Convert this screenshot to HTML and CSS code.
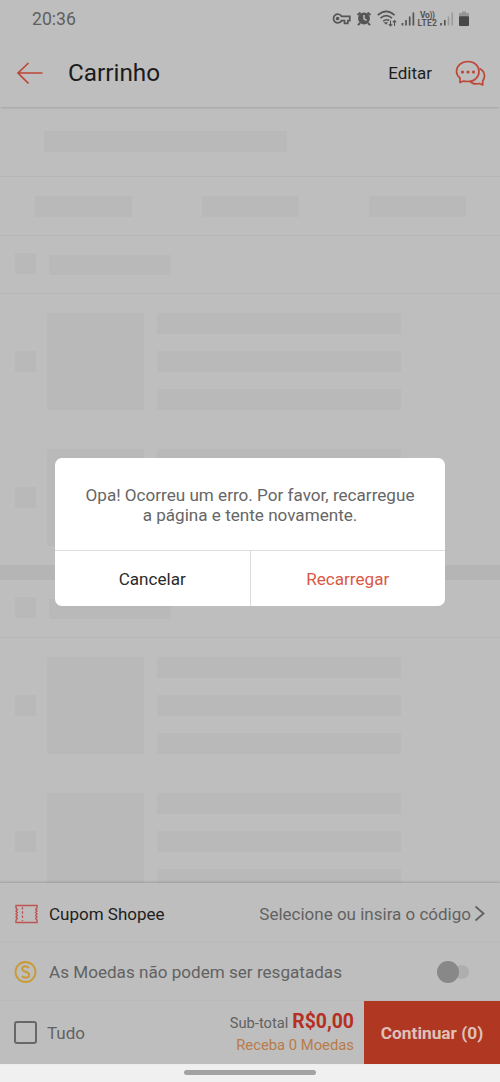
FILE: index.html
```html
<!DOCTYPE html>
<html lang="pt-BR">
<head>
<meta charset="utf-8">
<title>Carrinho</title>
<link rel="stylesheet" href="styles.css">
</head>
<body>
<div class="screen">
  <div class="status">
    <span class="clock">20:36</span>
    <svg class="status-icons" width="140" height="22" viewBox="0 0 140 22">
      <g fill="none" stroke="#555" stroke-width="1.700">
        <path d="M11.500 8.300A4.300 4.300 0 1 0 11.500 12.700H14.500V15.300H17.800V12.700H19.800V8.300Z"/>
        <circle cx="7.600" cy="10.500" r="1"/>
      </g>
      <circle cx="34" cy="10.500" r="5.900" fill="#555"/>
      <path d="M27.500 7 30.500 4.500M40.500 7 37.500 4.500M30 15l-2 2.200M38 15l2 2.200" stroke="#555" stroke-width="2"/>
      <path d="M34 7V10.800l2.600 1.500" fill="none" stroke="#c2c2c2" stroke-width="1.400"/>
      <g fill="none" stroke="#555" stroke-width="1.600">
        <path d="M47.800 7.200Q56.200-.600 64.600 7.200M50.500 10.200Q56.200 5 61.900 10.200M53.200 13.200Q56.200 10.800 59.200 12.500"/>
      </g>
      <path d="M56.200 16.800 53.500 14.200h4.500z" fill="#555"/>
      <path d="M60.500 12.500v5.500M58.800 16.200l1.700 1.800 1.700-1.800M64.500 18v-5.500M62.800 14.300l1.700-1.800 1.700 1.800" fill="none" stroke="#555" stroke-width="1.100"/>
      <path d="M72.500 17.500v-2.500M76 17.500v-5.500M79.700 17.500v-9M83.400 17.500v-13" stroke="#555" stroke-width="1.700"/>
      <text class="volte" x="90" y="9.500" textLength="15">Vo))</text>
      <text class="volte" x="87.500" y="17.700" textLength="19.500">LTE2</text>
      <path d="M111 17.500v-2.500M114.800 17.500v-5.500" stroke="#555" stroke-width="1.700"/>
      <path d="M118.500 17.500v-9M122.200 17.500v-13" stroke="#999" stroke-width="1.500"/>
      <path d="M129 5h3V3.500h4V5h3V9h-10z" fill="#969696"/>
      <rect x="129" y="8.300" width="10" height="9.700" rx="1" fill="#484848"/>
    </svg>
  </div>
  <div class="header">
    <svg class="back" width="28" height="24" viewBox="0 0 28 24"><path d="M26.500 12H2.500M12.500 2 2 12l10.500 10.500" fill="none" stroke="#c04536" stroke-width="1.700"/></svg>
    <h1 class="title">Carrinho</h1>
    <span class="edit">Editar</span>
    <svg class="chat" width="32" height="28" viewBox="0 0 32 28">
      <g fill="none" stroke="#bd4738" stroke-width="1.700" stroke-linejoin="round">
        <path d="M13 2.500C19.500 2.500 24 7 24 12.500S19.500 22.500 13 22.500Q9.500 22.500 8.500 22L5 23.500V19Q1.500 16 1.500 12.500C1.500 7 6.500 2.500 13 2.500Z"/>
        <path d="M24.500 9.500C28 11 29.500 14 29.500 17Q29.500 19.500 27.700 22V26L24.500 24.500Q18 26 15.500 22.500"/>
      </g>
      <g fill="#bd4738"><circle cx="7.500" cy="13" r="1.600"/><circle cx="13" cy="13" r="1.600"/><circle cx="18.500" cy="13" r="1.600"/></g>
    </svg>
  </div>

  <div class="content">
    <div class="row banner"><i class="sk wide"></i></div>
    <div class="row tabs"><i class="sk tab"></i><i class="sk tab"></i><i class="sk tab"></i></div>
    <div class="row shop"><i class="sk check"></i><i class="sk name"></i></div>
    <div class="items">
      <div class="item"><i class="sk check"></i><i class="sk thumb"></i><div class="lines"><i class="sk line"></i><i class="sk line"></i><i class="sk line"></i></div></div>
      <div class="item"><i class="sk check"></i><i class="sk thumb"></i><div class="lines"><i class="sk line"></i><i class="sk line"></i><i class="sk line"></i></div></div>
    </div>
    <div class="band"></div>
    <div class="row shop"><i class="sk check"></i><i class="sk name"></i></div>
    <div class="items">
      <div class="item"><i class="sk check"></i><i class="sk thumb"></i><div class="lines"><i class="sk line"></i><i class="sk line"></i><i class="sk line"></i></div></div>
      <div class="item"><i class="sk check"></i><i class="sk thumb"></i><div class="lines"><i class="sk line"></i><i class="sk line"></i><i class="sk line"></i></div></div>
    </div>
  </div>

  <div class="footer">
    <div class="option coupon">
      <svg class="option-icon" width="24" height="20" viewBox="0 0 24 20">
        <path d="M2 1.500H23V4l-1.300 1.500L23 7l-1.300 1.500L23 10l-1.300 1.500L23 13l-1.300 1.500L23 16V18.500H2V16l1.300-1.500L2 13l1.300-1.500L2 10l1.300-1.500L2 7l1.300-1.500L2 4Z" fill="none" stroke="#bd5352" stroke-width="1.400"/>
        <path d="M8.500 3V17" stroke="#bd5352" stroke-width="1.300" stroke-dasharray="2.500 1.800"/>
      </svg>
      <span class="option-name">Cupom Shopee</span>
      <span class="option-hint">Selecione ou insira o código</span>
      <svg class="chevron" width="12" height="18" viewBox="0 0 12 18"><path d="M1.500 1.500 9.500 8.500l-8 7" fill="none" stroke="#626266" stroke-width="1.800"/></svg>
    </div>
    <div class="option">
      <svg class="option-icon" width="24" height="24" viewBox="0 0 24 24">
        <circle cx="11.500" cy="12" r="10" fill="none" stroke="#c99a35" stroke-width="1.800"/>
        <path d="M15 8Q13.500 6.300 11.500 6.300C9.500 6.300 8.200 7.500 8.200 9C8.200 12.500 15.200 11 15.200 14.800C15.200 16.500 13.600 17.700 11.700 17.700Q9.500 17.700 7.800 16" fill="none" stroke="#c99a35" stroke-width="1.900"/>
      </svg>
      <span class="coins">As Moedas não podem ser resgatadas</span>
      <span class="toggle"><i class="knob"></i><i class="track"></i></span>
    </div>
    <div class="checkout">
      <i class="box"></i>
      <span class="all">Tudo</span>
      <div class="totals">
        <div class="subtotal"><span class="sub-label">Sub-total</span><b class="amount">R$0,00</b></div>
        <div class="earn">Receba 0 Moedas</div>
      </div>
      <div class="continue">Continuar (0)</div>
    </div>
  </div>
  <div class="navbar"><i class="pill"></i></div>

  <div class="dialog">
    <p class="message">Opa! Ocorreu um erro. Por favor, recarregue<br>a página e tente novamente.</p>
    <div class="actions">
      <div class="action cancel">Cancelar</div>
      <div class="action reload">Recarregar</div>
    </div>
  </div>
</div>
</body>
</html>
```

FILE: styles.css
```css
* { box-sizing: border-box; }
body { margin: 0; font-family: Roboto, "Liberation Sans", sans-serif; background: #bebebe; }
.screen { position: relative; width: 500px; height: 1082px; display: flex; flex-direction: column; overflow: hidden; background: #bebebe; }
.status { height: 38px; flex: none; display: flex; justify-content: space-between; padding: 8px 30px 0 32px; }
.clock { font-size: 17.6px; line-height: 22px; color: #606060; }
.status-icons { flex: none; }
.volte { font-size: 8.5px; font-weight: 700; fill: #555; }
.header { height: 69px; flex: none; display: flex; align-items: center; padding: 0 13px 0 16px; box-shadow: 0 2px 2px -1px rgba(0, 0, 0, .14); }
.back { flex: none; }
.title { margin: 0 auto 0 24px; font-size: 24.3px; line-height: 30px; font-weight: 400; color: #1b1b1b; }
.edit { font-size: 17px; color: #1e1e1e; margin-right: 23px; }
.chat { flex: none; }

.content { flex: 1; min-height: 0; overflow: hidden; padding-top: 2px; }
.sk { display: block; flex: none; background: #b9b9b9; }
.row { border-bottom: 1px solid #b6b6b6; display: flex; align-items: center; }
.banner { height: 68px; padding: 0 44px; }
.wide { width: 243px; height: 21px; margin-bottom: 2px; }
.tabs { height: 59px; padding: 0 34px 0 35px; justify-content: space-between; }
.tab { width: 97px; height: 21px; }
.shop { height: 58px; padding-left: 15px; gap: 13px; }
.check { width: 21px; height: 21px; }
.shop .check { margin-bottom: 2px; }
.name { width: 122px; height: 20px; }
.items { height: 271px; padding: 19px 15px; display: flex; flex-direction: column; gap: 39px; }
.item { height: 97px; flex: none; display: flex; align-items: center; }
.thumb { width: 97px; height: 97px; margin: 0 13px 0 11px; }
.lines { display: flex; flex-direction: column; justify-content: space-between; height: 97px; }
.line { width: 244px; height: 21px; }
.band { height: 15px; background: #b5b5b5; }

.footer { flex: none; height: 181px; background: #bebebe; position: relative; box-shadow: 0 -1px 2px rgba(0, 0, 0, .16); }
.option { height: 59px; display: flex; align-items: center; padding: 3px 14px 2px; border-bottom: 1px solid #b9b9b9; font-size: 17.1px; color: #626262; }
.coupon { font-size: 17px; padding-top: 5px; }
.option-icon { flex: none; margin-right: 11px; }
.option-name { color: #1d1d1d; }
.option-hint { margin-left: auto; }
.chevron { margin-left: 3px; flex: none; }
.toggle { margin: 0 17px 0 auto; display: flex; align-items: center; }
.knob { width: 22px; height: 22px; border-radius: 50%; background: #888; }
.track { width: 10px; height: 14px; border-radius: 0 7px 7px 0; background: #aeaeae; box-shadow: -3px 0 0 -1px #aeaeae; }
.knob { position: relative; z-index: 1; }
.checkout { height: 63px; display: flex; align-items: center; padding-left: 14px; color: #626262; }
.box { width: 23px; height: 23px; border: 2px solid #686868; border-radius: 3px; }
.all { margin-left: 10px; font-size: 17px; }
.totals { margin-left: auto; margin-right: 10px; padding-top: 1px; text-align: right; }
.subtotal { line-height: 22px; display: flex; align-items: baseline; justify-content: flex-end; gap: 4px; }
.sub-label { font-size: 14.7px; }
.amount { font-size: 19.4px; color: #b52f23; }
.earn { font-size: 14.8px; line-height: 22px; color: #b97b49; }
.continue { width: 136px; height: 63px; line-height: 65px; text-align: center; background: #b03722; color: #dfc1b9; font-size: 17.3px; font-weight: 700; }
.navbar { flex: none; height: 18px; background: #f0f0f0; display: flex; justify-content: center; padding-top: 6px; }
.pill { width: 132px; height: 5px; border-radius: 3px; background: #a2a2a2; }

.dialog { position: absolute; left: 55px; top: 458px; width: 390px; height: 148px; border-radius: 7px; background: #fff; display: flex; flex-direction: column; overflow: hidden; }
.message { flex: none; margin: 0; height: 92px; padding-top: 27px; text-align: center; font-size: 17.1px; line-height: 20px; color: #666; }
.actions { flex: none; height: 56px; display: flex; border-top: 1px solid #dcdcdc; }
.action { flex: 1; text-align: center; line-height: 57px; font-size: 17.1px; }
.cancel { color: #2b2b2b; }
.reload { border-left: 1px solid #dcdcdc; color: #da5844; }
```
